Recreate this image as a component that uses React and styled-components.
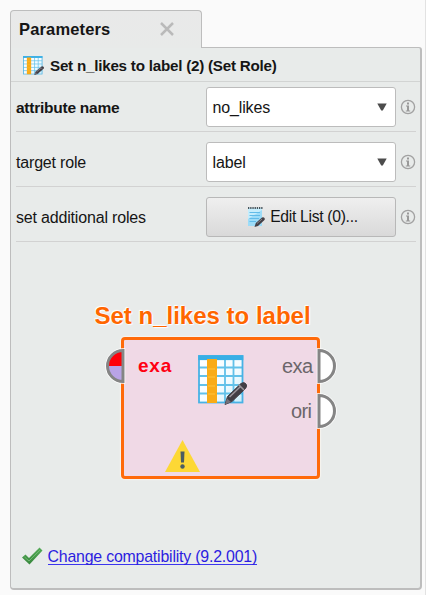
import React from "react";
import styled, { createGlobalStyle } from "styled-components";

const Global = createGlobalStyle`
  * { box-sizing: border-box; }
  body { margin: 0; background: #fafafa; font-family: "Liberation Sans", Arial, sans-serif; color: #151515; }
`;

const Page = styled.div`
  width: 426px;
  height: 595px;
  padding: 10px 3px 5px 10px;
  border-right: 1px solid #e2e2e2;
  display: flex;
  flex-direction: column;
  overflow: hidden;
`;

const Tab = styled.div`
  width: 192px;
  height: 38px;
  flex: none;
  margin-bottom: -1px;
  z-index: 1;
  border: 1.5px solid #bdbdbd;
  border-bottom: 0;
  border-radius: 4px 4px 0 0;
  background: linear-gradient(#e9e9e9, #e8eae9);
  display: flex;
  align-items: center;
  gap: 49px;
  padding: 0 0 2px 8px;
`;

const TabTitle = styled.span`
  font-size: 16.5px;
  font-weight: bold;
  letter-spacing: 0.15px;
  width: 92px;
  margin-top: 1px;
  white-space: nowrap;
`;

const Panel = styled.section`
  flex: 1;
  min-height: 0;
  border: 1px solid #bdbdbd;
  border-right-width: 2px;
  border-bottom-width: 2px;
  border-radius: 0 3px 4px 4px;
  background: #e8ebea;
  display: flex;
  flex-direction: column;
`;

const Header = styled.header`
  height: 34px;
  flex: none;
  display: flex;
  align-items: center;
  gap: 6px;
  padding: 1px 0 0 12px;
  border-bottom: 1px solid #d2d4d3;
  font-size: 15.2px;
  font-weight: bold;
  letter-spacing: -0.23px;
  white-space: nowrap;
`;

const Row = styled.div`
  height: ${(p) => (p.$first ? 50 : 55)}px;
  flex: none;
  margin: 0 4px 0 5px;
  padding-top: ${(p) => (p.$first ? 0 : 5)}px;
  border-bottom: 1px solid #d2d2d2;
  display: flex;
  align-items: center;
`;

const Label = styled.label`
  width: 190px;
  flex: none;
  padding-top: 3px;
  font-size: ${(p) => (p.$bold ? 15.5 : 16)}px;
  font-weight: ${(p) => (p.$bold ? "bold" : "normal")};
  letter-spacing: ${(p) => (p.$bold ? -0.25 : -0.18)}px;
  white-space: nowrap;
`;

const Select = styled.div`
  width: 190px;
  height: 40px;
  flex: none;
  padding: 1px 8px 0 5.5px;
  border: 1.5px solid #bcbcbc;
  border-radius: 3px;
  background: #fff;
  display: flex;
  align-items: center;
  justify-content: space-between;
  font-size: 16px;
  letter-spacing: -0.15px;
`;

const SelectText = styled.span`
  padding-top: 1px;
`;

const EditButton = styled.button`
  width: 190px;
  height: 40px;
  flex: none;
  padding: 0 0 0 3px;
  border: 1.5px solid #b8b8b8;
  border-radius: 3px;
  background: linear-gradient(#efefef, #d9d9d9);
  color: #151515;
  display: flex;
  align-items: center;
  justify-content: center;
  gap: 5px;
  font: 15.7px "Liberation Sans", Arial, sans-serif;
  letter-spacing: -0.3px;
`;

const InfoIcon = styled.svg`
  width: 16px;
  height: 16px;
  margin-left: 4px;
  flex: none;
`;

const Operator = styled.div`
  margin: 59px 0 0 83.5px;
  width: 242px;
  flex: none;
`;

const OperatorTitle = styled.h2`
  margin: 0 0 6px;
  height: 30px;
  line-height: 30px;
  font-size: 24px;
  font-weight: bold;
  color: #ff6600;
  text-shadow: 0 0 2px #fff, 1px 1px 1px #fff, -1px -1px 1px #fff;
  white-space: nowrap;
`;

const Box = styled.div`
  position: relative;
  margin-left: 26.5px;
  width: 199px;
  height: 142px;
  border: 3px solid #ff6a0a;
  border-radius: 4px;
  background: #f0d9e6;
  box-shadow: 0 0 1px 1px #f7f4ef;
`;

const Port = styled.svg`
  position: absolute;
  width: 21px;
  height: 36px;
  top: ${(p) => p.$top}px;
  left: ${(p) => p.$left}px;
`;

const PortName = styled.span`
  position: absolute;
  top: ${(p) => p.$top}px;
  left: ${(p) => p.$left}px;
  line-height: 22px;
  font-size: ${(p) => (p.$alert ? 19 : 20)}px;
  font-weight: ${(p) => (p.$alert ? "bold" : "normal")};
  letter-spacing: ${(p) => (p.$alert ? 0.8 : -0.6)}px;
  color: ${(p) => (p.$alert ? "#ff0012" : "#6b666a")};
`;

const Place = styled.span`
  position: absolute;
  top: ${(p) => p.$top}px;
  left: ${(p) => p.$left}px;
  display: flex;
`;

const Footer = styled.footer`
  margin: auto 0 22px 11px;
  height: 20px;
  display: flex;
  align-items: center;
  gap: 4.5px;
`;

const Link = styled.a`
  font-size: 15.9px;
  letter-spacing: -0.2px;
  line-height: 17px;
  margin-top: 1px;
  color: #2c1de0;
  border-bottom: 1px solid #3b35ee;
  white-space: nowrap;
  height: 17px;
`;

function TableIcon({ width, height }) {
  const big = width > 30;
  return (
    <svg width={width} height={height} viewBox="0 0 49 50" preserveAspectRatio="none">
      <defs>
        <linearGradient id="cells" x1="0" y1="0" x2="1" y2="1">
          <stop offset="0" stopColor="#fff" />
          <stop offset=".6" stopColor="#f4fcff" />
          <stop offset="1" stopColor="#c9edfb" />
        </linearGradient>
      </defs>
      <rect x="1" y="1" width="43" height="46" fill="url(#cells)" />
      <path
        d="M1 12.5H44M1 21H44M1 30H44M1 38.5H44M27 5V47M35.5 5V47"
        stroke="#62c1e9"
        strokeWidth={big ? 1.8 : 1.8}
      />
      <rect x="1" y="1" width="43.5" height="46.5" fill="none" stroke="#48b2e5" strokeWidth="1.8" />
      <rect x=".3" y=".3" width="45" height="4.8" fill="#38afe5" />
      <rect x="9" y="4" width="10" height="44" fill="#f9ab16" />
      <path d="M10 14h7M10 22h7M10 31h7M10 39h7" stroke="#ffc33b" />
      <path d="M27 49.5l2.5-8L43 28.500q3-2 5 .5 1.500 2-.5 4.500L34 46.500z" fill="#423e45" stroke="#423e45" strokeWidth="1" strokeLinejoin="round" />
      <path d="M31.500 42L42 32M40.500 29.500l5.500 5.500" stroke="#9b969d" strokeWidth="1.500" />
      <path d="M27 49.500l2-6 4 3.500z" fill="#77717a" />
    </svg>
  );
}

function NoteIcon() {
  return (
    <svg width="18" height="22" viewBox="0 0 18 22">
      <path d="M1 2h14v18H1z" fill="#c6edfc" />
      <path d="M1 20V13L15 4v16z" fill="#9ddcf8" />
      <path d="M2.500 6.500H13M2.500 9.500H13M2.500 12.500H12M2.500 15.500H9" stroke="#62bce9" />
      <path d="M1 2h15" stroke="#47535a" strokeWidth="2.200" strokeDasharray="1.300 .9" />
      <path d="M7.500 21l1.300-4L15 11.500q1.500-.8 2.500.5.700 1.300-.3 2.300L11 20z" fill="#454148" />
      <path d="M10 17.500l5-4.500" stroke="#99959c" strokeWidth=".8" />
    </svg>
  );
}

function Info() {
  return (
    <InfoIcon viewBox="0 0 16 16">
      <circle cx="8" cy="8" r="6.600" fill="none" stroke="#a1a1a1" strokeWidth="1.300" />
      <path d="M7 3.500h2v2H7zM6 6.500h3v5h1.200v1H5.800v-1H7v-4H6z" fill="#999" />
    </InfoIcon>
  );
}

function Arrow() {
  return (
    <svg width="10" height="8" viewBox="0 0 10 8">
      <path d="M.3.500h9.400L5.800 7.500H4.200z" fill="#4c4c4c" />
    </svg>
  );
}

function OutPort({ top }) {
  return (
    <Port $top={top} $left={192} viewBox="0 0 21 36">
      <path d="M3 2.500a15.500 15.500 0 0 1 0 31z" fill="#fff" stroke="#fff" strokeWidth="4.500" />
      <path d="M3 2.500a15.500 15.500 0 0 1 0 31z" fill="#fff" stroke="#858585" strokeWidth="3" />
    </Port>
  );
}

export default function App() {
  return (
    <>
      <Global />
      <Page>
        <Tab>
          <TabTitle>Parameters</TabTitle>
          <svg width="14" height="14" viewBox="0 0 14 14">
            <path d="M1 1l12 12M13 1L1 13" stroke="#bababa" strokeWidth="2.500" />
          </svg>
        </Tab>
        <Panel>
          <Header>
            <TableIcon width={21} height={19} />
            Set n_likes to label (2) (Set Role)
          </Header>
          <Row $first>
            <Label $bold>attribute name</Label>
            <Select><SelectText>no_likes</SelectText><Arrow /></Select>
            <Info />
          </Row>
          <Row>
            <Label>target role</Label>
            <Select><SelectText>label</SelectText><Arrow /></Select>
            <Info />
          </Row>
          <Row>
            <Label>set additional roles</Label>
            <EditButton><NoteIcon />Edit List (0)...</EditButton>
            <Info />
          </Row>
          <Operator>
            <OperatorTitle>Set n_likes to label</OperatorTitle>
            <Box>
              <Port $top={8} $left={-19} viewBox="0 0 21 36">
                <path d="M18 2.500a15.500 15.500 0 0 0 0 31z" fill="#fff" stroke="#fff" strokeWidth="4.500" />
                <path d="M18 2.500A15.500 15.500 0 0 0 2.500 18H18z" fill="#ff0009" />
                <path d="M2.500 18A15.500 15.500 0 0 0 18 33.500V18z" fill="#b9a3e6" />
                <path d="M18 2.500a15.500 15.500 0 0 0 0 31z" fill="none" stroke="#858585" strokeWidth="3" />
              </Port>
              <OutPort top={8} />
              <OutPort top={53} />
              <PortName $alert $top={15} $left={14}>exa</PortName>
              <PortName $top={15} $left={158}>exa</PortName>
              <PortName $top={60} $left={167}>ori</PortName>
              <Place $top={15} $left={74}><TableIcon width={49} height={50} /></Place>
              <Place $top={100} $left={41}>
                <svg width="35" height="32" viewBox="0 0 35 32">
                  <path d="M17.500 0L35 32H0z" fill="#fdd835" />
                  <path d="M15.500 11.500h4l-.5 11h-3z" fill="#4b5d62" />
                  <circle cx="17.500" cy="26.500" r="2.200" fill="#4b5d62" />
                </svg>
              </Place>
            </Box>
          </Operator>
          <Footer>
            <svg width="21" height="18" viewBox="0 0 21 18">
              <defs>
                <linearGradient id="tick" x1="0" y1="0" x2="0" y2="1">
                  <stop offset="0" stopColor="#55ab58" />
                  <stop offset="1" stopColor="#37873d" />
                </linearGradient>
              </defs>
              <path d="M0 10.500L3.500 7.500 7 11 17.500.500 20.500 3.500 7.500 17.500z" fill="url(#tick)" />
              <path d="M2.500 10l4.500 4L18 3" fill="none" stroke="#71b873" strokeWidth="1" />
            </svg>
            <Link>Change compatibility (9.2.001)</Link>
          </Footer>
        </Panel>
      </Page>
    </>
  );
}
